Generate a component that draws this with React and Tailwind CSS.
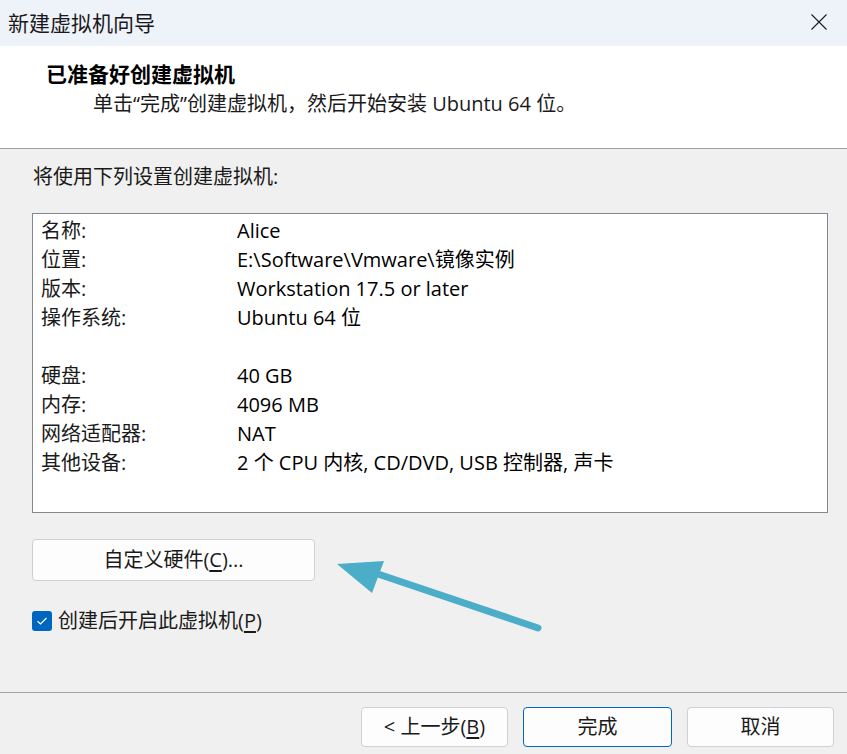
import React from 'react';

const font = { fontFamily: '"Open Sans", "Noto Sans CJK SC", sans-serif' };

const rows = [
  { label: '名称:', value: 'Alice' },
  { label: '位置:', value: 'E:\\Software\\Vmware\\镜像实例' },
  { label: '版本:', value: 'Workstation 17.5 or later' },
  { label: '操作系统:', value: 'Ubuntu 64 位' },
  { label: '', value: '' },
  { label: '硬盘:', value: '40 GB' },
  { label: '内存:', value: '4096 MB' },
  { label: '网络适配器:', value: 'NAT' },
  { label: '其他设备:', value: '2 个 CPU 内核, CD/DVD, USB 控制器, 声卡' },
];

function WizardButton({ children, primary }) {
  return (
    <button
      className={
        primary
          ? 'w-[149px] h-[40px] rounded-[4px] border border-[#0067c0] bg-[#fdfdfd] text-[20px] text-[#1a1a1a] flex items-center justify-center'
          : 'w-[147px] h-[40px] rounded-[4px] border border-[#d0d0d0] bg-[#fdfdfd] text-[20px] text-[#1a1a1a] flex items-center justify-center'
      }
    >
      {children}
    </button>
  );
}

export default function App() {
  return (
    <div className="relative w-[847px] h-[754px] bg-[#f0f0f0] flex flex-col overflow-hidden" style={font}>
      {/* Title bar */}
      <div className="h-[46px] shrink-0 bg-[#eef2f9] flex items-center justify-between pl-[8px] pr-[20px]">
        <span className="text-[21px] text-[#1a1a1a] leading-none">新建虚拟机向导</span>
        <svg width="16" height="16" viewBox="0 0 16 16" className="mt-[-2px]">
          <path d="M0.5 0.5 L15.5 15.5 M15.5 0.5 L0.5 15.5" stroke="#1a1a1a" strokeWidth="1.1" fill="none" />
        </svg>
      </div>

      {/* Header */}
      <div className="h-[103px] shrink-0 bg-white border-b border-[#a0a0a0] flex flex-col pt-[14px]">
        <h1 className="pl-[46px] text-[21px] font-bold leading-[28px] text-black">已准备好创建虚拟机</h1>
        <p className="pl-[93px] mt-[2px] text-[20px] leading-[28px] text-[#1a1a1a]">
          单击“完成”创建虚拟机，然后开始安装 Ubuntu 64 位。
        </p>
      </div>

      {/* Body */}
      <div className="flex-1 flex flex-col px-[32px] pt-[14px]">
        <p className="pl-[1px] text-[20px] leading-[28px] text-[#1a1a1a]">将使用下列设置创建虚拟机:</p>
        <div className="mt-[22px] w-[796px] h-[300px] bg-white border border-[#828790] pt-[2px] pl-[8px]">
          {rows.map((r, i) => (
            <div key={i} className="flex h-[29px] items-center text-[20px] leading-[29px]">
              <span className="w-[196px] text-[#1a1a1a]">{r.label}</span>
              <span className="text-black">{r.value}</span>
            </div>
          ))}
        </div>

        <button className="mt-[26px] w-[283px] h-[42px] rounded-[4px] border border-[#d0d0d0] bg-[#fdfdfd] text-[20px] text-[#1a1a1a] flex items-center justify-center">
          自定义硬件(<span className="underline underline-offset-[3px]">C</span>)...
        </button>

        <label className="mt-[30px] flex items-center gap-[6px] text-[20px] text-[#1a1a1a]">
          <span className="w-[20px] h-[20px] rounded-[3px] bg-[#0067c0] flex items-center justify-center">
            <svg width="12" height="10" viewBox="0 0 12 10">
              <path d="M1.5 5.2 L4.5 8 L10.5 2" stroke="white" strokeWidth="1.2" fill="none" />
            </svg>
          </span>
          <span className="leading-[20px]">
            创建后开启此虚拟机(<span className="underline underline-offset-[3px]">P</span>)
          </span>
        </label>
      </div>

      {/* Footer */}
      <div className="h-[62px] shrink-0 border-t border-[#a0a0a0] flex justify-end items-start gap-[15px] pt-[14px] pr-[13px]">
        <WizardButton>
          &lt; 上一步(<span className="underline underline-offset-[3px]">B</span>)
        </WizardButton>
        <WizardButton primary>完成</WizardButton>
        <WizardButton>取消</WizardButton>
      </div>

      {/* Annotation arrow */}
      <svg className="absolute inset-0 pointer-events-none" width="847" height="754" viewBox="0 0 847 754">
        <line x1="538" y1="628" x2="378" y2="574" stroke="#4badc7" strokeWidth="7" strokeLinecap="round" />
        <polygon points="337,564 384,561 372,593" fill="#4badc7" />
      </svg>
    </div>
  );
}
